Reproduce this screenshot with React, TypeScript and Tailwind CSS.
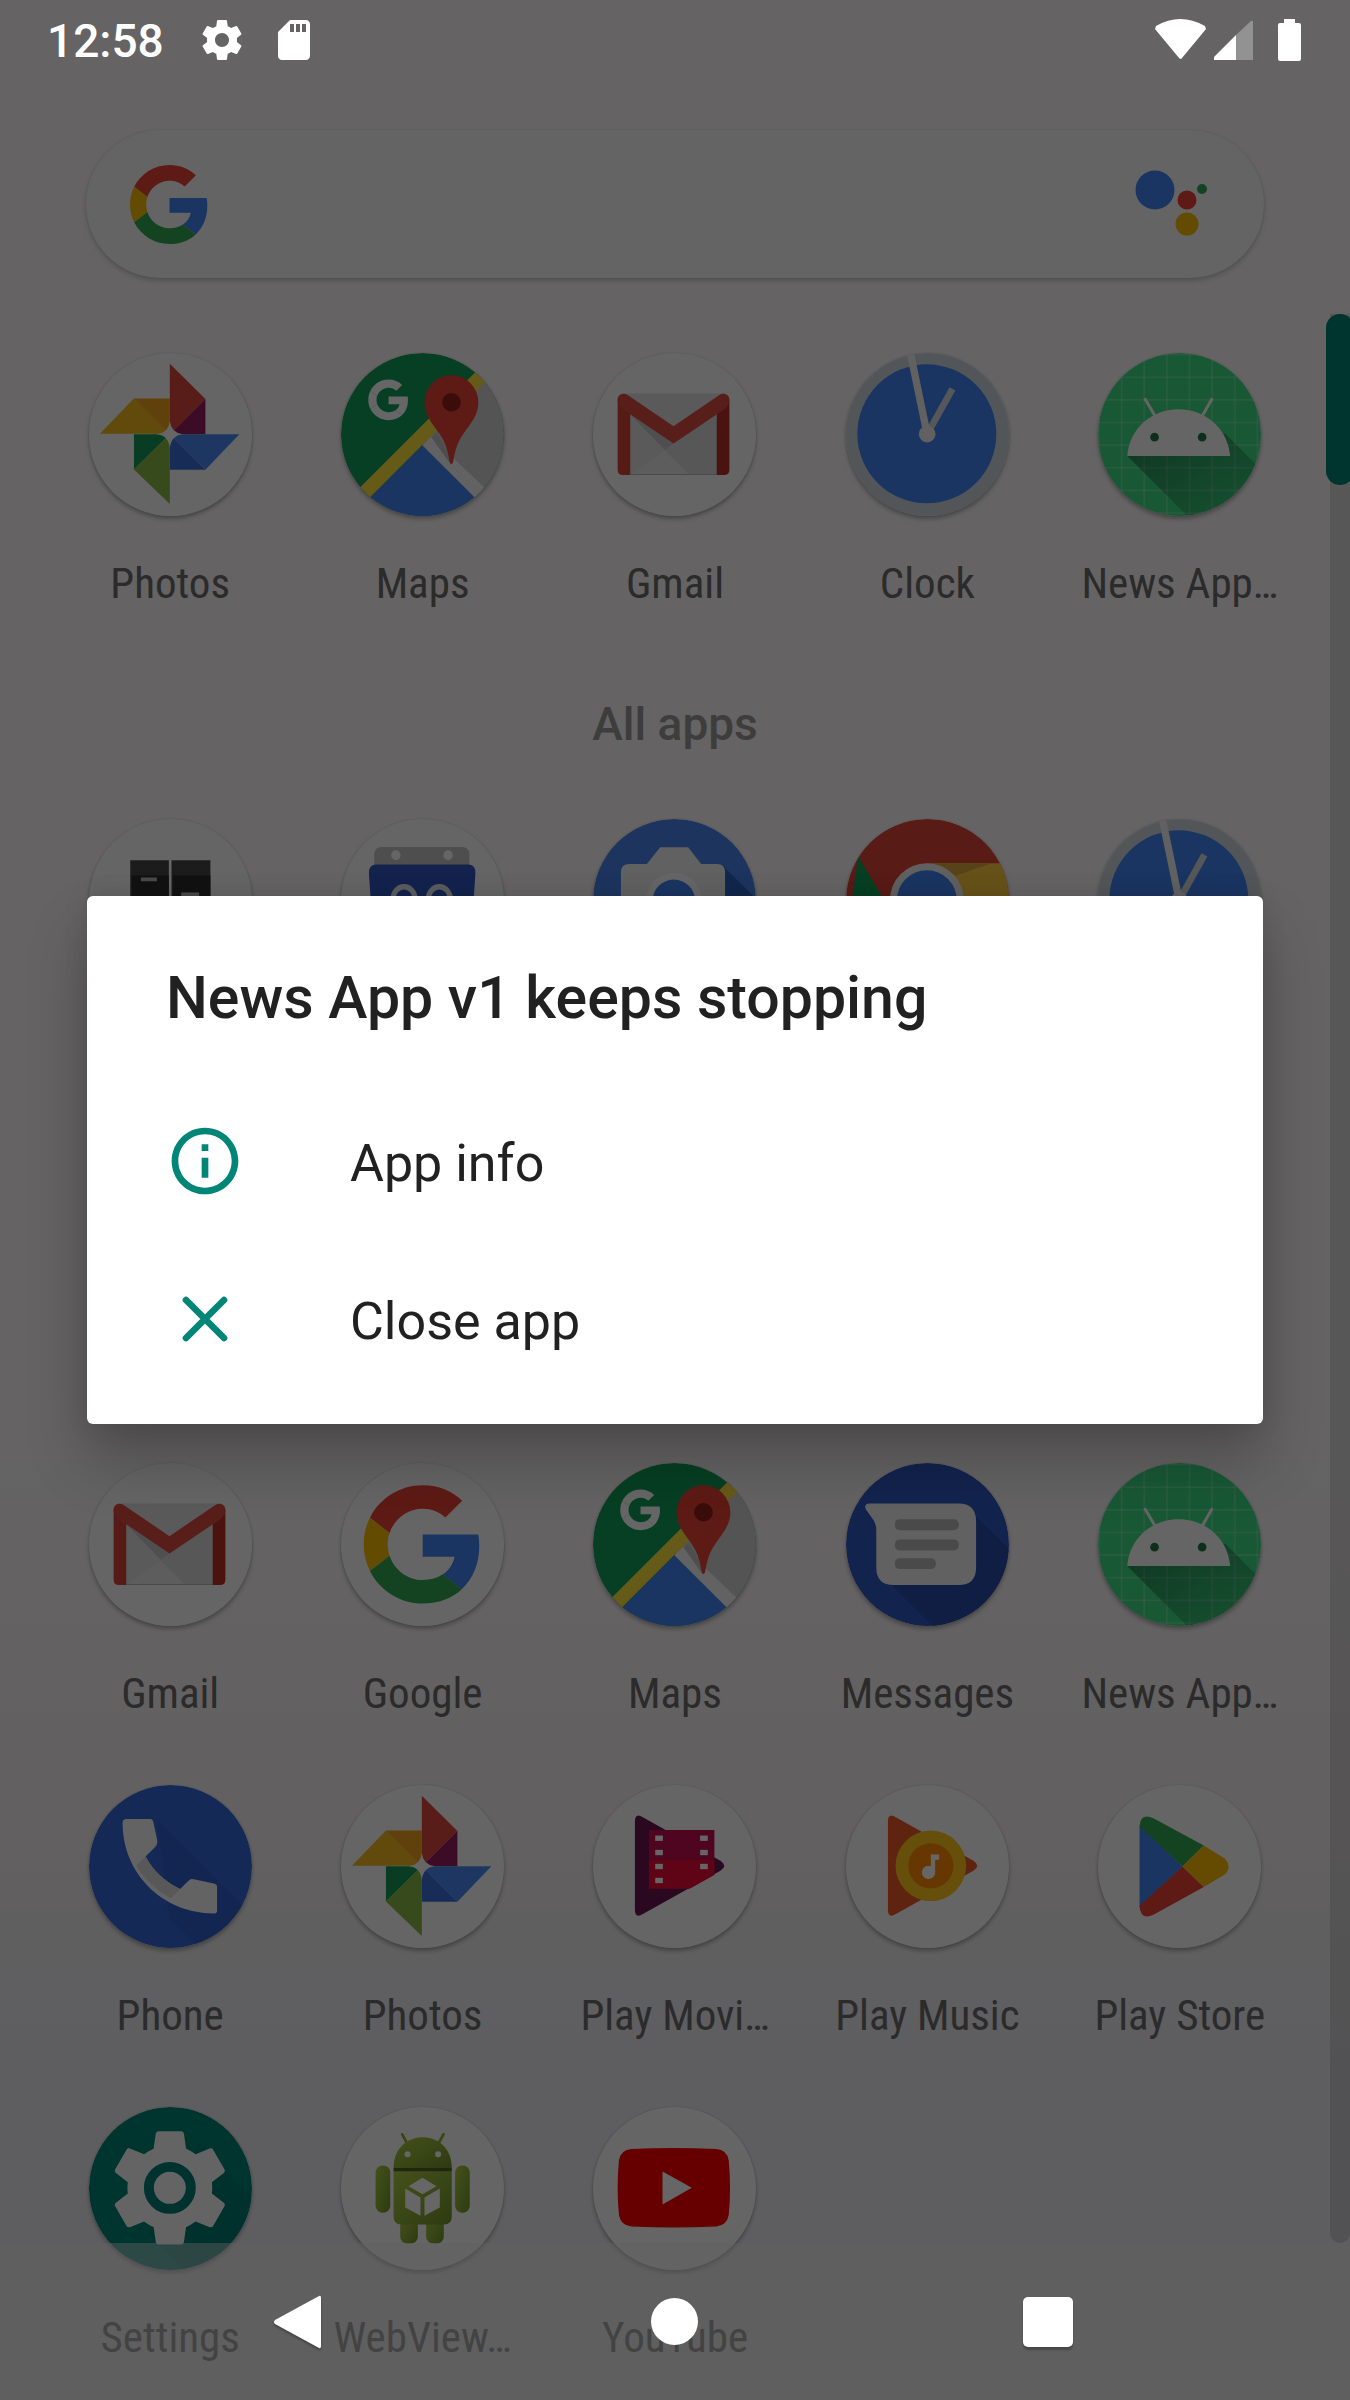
import React from "react";

const GEAR =
  "M19.43 12.98c.04-.32.07-.64.07-.98s-.03-.66-.07-.98l2.11-1.65c.19-.15.24-.42.12-.64l-2-3.46c-.12-.22-.39-.3-.61-.22l-2.49 1c-.52-.4-1.08-.73-1.69-.98l-.38-2.65C14.46 2.18 14.25 2 14 2h-4c-.25 0-.46.18-.49.42l-.38 2.65c-.61.25-1.17.59-1.69.98l-2.49-1c-.23-.09-.49 0-.61.22l-2 3.46c-.13.22-.07.49.12.64l2.11 1.65c-.04.32-.07.65-.07.98s.03.66.07.98l-2.11 1.65c-.19.15-.24.42-.12.64l2 3.46c.12.22.39.3.61.22l2.49-1c.52.4 1.08.73 1.69.98l.38 2.65c.03.24.24.42.49.42h4c.25 0 .46-.18.49-.42l.38-2.65c.61-.25 1.17-.59 1.69-.98l2.49 1c.23.09.49 0 .61-.22l2-3.46c.12-.22.07-.49-.12-.64l-2.11-1.65zM12 15.5c-1.93 0-3.5-1.57-3.5-3.5s1.57-3.5 3.5-3.5 3.5 1.57 3.5 3.5-1.57 3.5-3.5 3.5z";

function GMark({ mono }: { mono?: boolean }) {
  return (
    <>
      <path fill={mono ? "#fff" : "#EA4335"} d="M24 9.5c3.54 0 6.71 1.22 9.21 3.6l6.85-6.85C35.9 2.38 30.47 0 24 0 14.62 0 6.51 5.38 2.56 13.22l7.98 6.19C12.43 13.72 17.74 9.5 24 9.5z" />
      <path fill={mono ? "#fff" : "#4285F4"} d="M46.98 24.55c0-1.57-.15-3.09-.38-4.55H24v9.02h12.94c-.58 2.96-2.26 5.48-4.78 7.18l7.73 6c4.51-4.18 7.09-10.36 7.09-17.65z" />
      <path fill={mono ? "#fff" : "#FBBC05"} d="M10.53 28.59c-.48-1.45-.76-2.99-.76-4.59s.27-3.14.76-4.59l-7.98-6.19C.92 16.46 0 20.12 0 24c0 3.88.92 7.54 2.56 10.78l7.97-6.19z" />
      <path fill={mono ? "#fff" : "#34A853"} d="M24 48c6.48 0 11.93-2.13 15.89-5.81l-7.73-6c-2.15 1.45-4.92 2.3-8.16 2.3-6.26 0-11.57-4.22-13.47-9.91l-7.98 6.19C6.51 42.62 14.62 48 24 48z" />
    </>
  );
}

function Disc({ fill = "#fdfdfd", children }: { fill?: string; children?: React.ReactNode }) {
  const id = React.useId();
  return (
    <svg
      viewBox="0 0 490 490"
      className="h-[163px] w-[163px] rounded-full shadow-[0_3px_4px_rgba(0,0,0,0.28),0_0_2px_rgba(0,0,0,0.15)]"
      aria-hidden="true"
    >
      <defs>
        <clipPath id={id}>
          <circle cx="245" cy="245" r="245" />
        </clipPath>
      </defs>
      <g clipPath={`url(#${id})`}>
        <rect width="490" height="490" fill={fill} />
        {children}
      </g>
    </svg>
  );
}

function PhotosIcon() {
  return (
    <Disc>
      <path fill="#DB4A3D" d="M243 32L350 138 243 244z" />
      <path fill="#96205F" d="M350 138V244H243z" />
      <path fill="#F2B91F" d="M33 243L135 137 243 243z" />
      <path fill="#F0A21C" d="M135 137H243V244z" />
      <path fill="#4C8BF5" d="M243 244H452L350 351z" />
      <path fill="#3B6FD6" d="M243 244L350 351H243z" />
      <path fill="#14995A" d="M135 244H243L135 350z" />
      <path fill="#8AB944" d="M243 244V454L135 350z" />
      <path fill="#fff" d="M243 205Q247 240 282 244 247 248 243 285 239 248 204 244 239 240 243 205z" />
    </Disc>
  );
}

function MapsIcon() {
  return (
    <Disc fill="#0F9D58">
      <path fill="#D2D2D2" d="M270 222L430 62H490V490H400L245 277z" />
      <path fill="#4285F4" d="M245 277L20 502H470z" />
      <path fill="#F5F5F5" d="M245 277L270 252 450 422 420 452z" />
      <path stroke="#FFE03C" strokeWidth="42" d="M50 441L450 41" />
      <path fill="#C4C4C4" d="M288 240L335 320 330 335 272 254z" />
      <path fill="#EA4335" d="M332 67a81 81 0 0 1 81 81c0 38-22 62-46 96-22 32-26 62-30 84q-5 12-10 0c-4-22-8-52-30-84-24-34-46-58-46-96a81 81 0 0 1 81-81z" />
      <circle cx="332" cy="148" r="28" fill="#912119" />
      <g transform="translate(82 80) scale(2.54)">
        <GMark mono />
      </g>
    </Disc>
  );
}

function GmailIcon() {
  return (
    <Disc>
      <path fill="#E0E0E0" d="M90 122H394V367H90z" />
      <path fill="#C6C6C6" d="M112 185L242 272 372 185V367H290z" />
      <path fill="#D9D9D9" d="M242 272L372 185V367H290L215 292z" />
      <path fill="#E8E8E8" d="M112 367L215 292 290 367z" />
      <path fill="#B9B9B9" d="M112 364H372V367H112z" />
      <path fill="#D8423A" d="M74 140V351Q74 367 90 367H112V165z" />
      <path fill="#B8302A" d="M410 140V351Q410 367 394 367H372V165z" />
      <path fill="#DC4B40" d="M74 140C74 124 92 118 104 126L242 220 380 126C392 118 410 124 410 140Q410 158 396 168L242 272 88 168Q74 158 74 140z" />
    </Disc>
  );
}

function ClockIcon() {
  return (
    <Disc fill="#CFD8DC">
      <circle cx="243" cy="243" r="209" fill="#4285F4" />
      <path stroke="#D8DADC" strokeWidth="20" d="M244 244L320 108" />
      <path stroke="#F2F2F2" strokeWidth="22" d="M194 2L244 244" />
      <circle cx="244" cy="244" r="25" fill="#F2F2F2" />
    </Disc>
  );
}

function NewsIcon() {
  const id = React.useId();
  const lines = [3, 71, 139, 207, 275, 343, 411, 479];
  return (
    <Disc fill="#3DDC84">
      <defs>
        <linearGradient id={id} x1="0" y1="0" x2="1" y2="1">
          <stop offset="0" stopOpacity=".38" />
          <stop offset="1" stopOpacity=".06" />
        </linearGradient>
      </defs>
      {lines.map((n) => (
        <path key={n} stroke="#fff" strokeOpacity=".22" strokeWidth="5" d={`M${n} 0V490M0 ${n + 2}H490`} />
      ))}
      <path fill={`url(#${id})`} d="M88 310L270 492H490V350L382 242z" />
      <path fill="#fdfdfd" d="M88 310C94 228 160 169 242 169S391 228 397 310z" />
      <path stroke="#fdfdfd" strokeWidth="9" strokeLinecap="round" d="M142 139L172 190M342 139L313 190" />
      <circle cx="170" cy="253" r="13" fill="#22764A" />
      <circle cx="313" cy="253" r="13" fill="#22764A" />
    </Disc>
  );
}

function DrawersIcon() {
  return (
    <Disc>
      <path fill="#484848" d="M124 124H240V365H124zM248 124H365V365H248z" />
      <path fill="#2E2E30" d="M128 170H240V365H128zM252 170H365V365H252z" />
      <path fill="#B9B9BD" d="M156 176H204V187H156zM277 221H331V232H277z" />
    </Disc>
  );
}

function CalendarIcon() {
  return (
    <Disc>
      <rect x="100" y="84" width="286" height="100" rx="20" fill="#C4C4C4" />
      <ellipse cx="165" cy="109" rx="14" ry="15" fill="#fdfdfd" />
      <ellipse cx="322" cy="109" rx="14" ry="15" fill="#fdfdfd" />
      <path fill="#3158C4" d="M104 137H384Q406 139 404 165L390 370H98L84 165Q82 139 104 137z" />
      <path fill="none" stroke="#E6E8EE" strokeWidth="16" d="M156 245C156 190 223 190 223 245M262 245C262 190 329 190 329 245" />
    </Disc>
  );
}

function CameraIcon() {
  return (
    <Disc fill="#4A86EC">
      <path fill="#2F62BD" d="M390 140L490 240V490H250L100 350z" />
      <path fill="#F3F3F3" d="M202 85H286L325 135H372Q397 135 397 160V350H84V160Q84 135 109 135H162z" />
      <circle cx="243" cy="246" r="84" fill="#fff" />
      <circle cx="243" cy="246" r="64" fill="#4285F4" />
    </Disc>
  );
}

function ChromeIcon() {
  return (
    <Disc fill="#DB4437">
      <path fill="#0F9D58" d="M37 112L147 300 245 490H-20z" />
      <path fill="#FFCD40" d="M243 133H490V490H240L340 300z" />
      <path fill="#D9A93A" d="M243 133H440L330 170z" />
      <circle cx="243" cy="244" r="111" fill="#F1F1F1" />
      <circle cx="243" cy="244" r="90" fill="#4285F4" />
    </Disc>
  );
}

function GoogleIcon() {
  return (
    <Disc>
      <g transform="translate(68 67) scale(7.4)">
        <GMark />
      </g>
    </Disc>
  );
}

function MessagesIcon() {
  return (
    <Disc fill="#2F57C2">
      <path fill="#284DA8" d="M391 160L510 279V520H290L110 340z" />
      <path fill="#F3F3F3" d="M70 122H338Q391 122 391 175V314Q391 367 338 367H144Q91 367 91 314V200Q91 186 83 172L60 140Q52 124 70 122z" />
      <g fill="#B9B9B9">
        <rect x="147" y="169" width="192" height="33" rx="14" />
        <rect x="147" y="230" width="192" height="33" rx="14" />
        <rect x="147" y="286" width="123" height="33" rx="14" />
      </g>
    </Disc>
  );
}

function PhoneIcon() {
  return (
    <Disc fill="#3366D6">
      <path fill="#2F60CA" d="M205 105L490 390V490H330L240 400z" />
      <path fill="#F8F8F8" d="M113 102H185Q192 102 193 110L205 165Q207 178 198 187L170 215Q205 280 274 313L300 287Q306 281 315 283L375 296Q385 298 385 306V378Q385 387 375 386C220 385 101 265 101 114Q101 102 113 102z" />
      <path fill="#DCDCDC" d="M170 215Q205 280 274 313L246 341Q175 300 142 243z" />
    </Disc>
  );
}

const PLAY = "M126 110Q126 82 150 97L383 228Q406 243 383 258L150 388Q126 402 126 375z";

function MoviesIcon() {
  const id = React.useId();
  return (
    <Disc>
      <clipPath id={id}>
        <path d="M126 40H366V270L126 404z" />
      </clipPath>
      <path fill="#6A1450" d={PLAY} />
      <g clipPath={`url(#${id})`}>
        <path fill="#C60A50" d="M168 135H366V224H168z" />
        <path fill="#EE0A38" d="M168 224H366V312H168z" />
      </g>
      {[160, 203, 245, 287].map((y) => (
        <rect key={y} x="187" y={y - 8} width="23" height="16" fill="#fff" />
      ))}
      {[160, 203, 245].map((y) => (
        <rect key={y} x="322" y={y - 8} width="23" height="16" fill="#fff" />
      ))}
    </Disc>
  );
}

function MusicIcon() {
  return (
    <Disc>
      <path fill="#EE5A2A" d={PLAY} />
      <circle cx="255" cy="243" r="106" fill="#FFC61C" />
      <circle cx="255" cy="243" r="68" fill="#FF8A00" />
      <path fill="#fff" d="M255 209H280V225H268V262A20 20 0 1 1 255 244z" />
    </Disc>
  );
}

function StoreIcon() {
  return (
    <Disc>
      <path fill="#4285F4" d="M125 122L254 245 125 368z" />
      <path fill="#34A853" d="M125 125Q127 80 168 101L318 182 254 245z" />
      <path fill="#EA4335" d="M125 363Q127 409 168 389L318 307 254 245z" />
      <path fill="#FBBC04" d="M318 182L380 220Q405 245 380 270L318 307 254 245z" />
    </Disc>
  );
}

function SettingsIcon() {
  return (
    <Disc fill="#008577">
      <path fill="#007A70" d="M330 110L490 270V490H290L180 380z" />
      <g transform="translate(39 39) scale(17)">
        <path fill="#FAFAFA" d={GEAR} />
      </g>
      <circle cx="243" cy="243" r="90" fill="#FAFAFA" />
      <circle cx="243" cy="243" r="63" fill="none" stroke="#007F78" strokeWidth="30" />
    </Disc>
  );
}

function WebViewIcon() {
  const id = React.useId();
  return (
    <Disc>
      <defs>
        <linearGradient id={id} x1="0" y1="0" x2="1" y2="1">
          <stop offset="0" stopColor="#ABCB45" />
          <stop offset="1" stopColor="#73932A" />
        </linearGradient>
      </defs>
      <path stroke="#8CAE35" strokeWidth="8" strokeLinecap="round" d="M184 82L202 115M308 82L290 115" />
      <g fill={`url(#${id})`}>
        <path d="M158 183C158 60 333 60 333 183z" />
        <rect x="104" y="176" width="44" height="142" rx="21" />
        <rect x="343" y="176" width="44" height="142" rx="21" />
        <rect x="178" y="320" width="53" height="90" rx="20" />
        <rect x="256" y="320" width="53" height="90" rx="20" />
        <path d="M158 194H333V330Q333 353 310 353H181Q158 353 158 330z" />
      </g>
      <path fill="#4F6520" d="M158 183H333V194H158z" />
      <circle cx="200" cy="142" r="9" fill="#fff" />
      <circle cx="292" cy="142" r="9" fill="#fff" />
      <path fill="#fff" d="M245 213L287 238 245 262 203 238zM193 245L239 272V327L193 302zM297 245L251 272V327L297 302z" />
    </Disc>
  );
}

function YouTubeIcon() {
  return (
    <Disc>
      <path fill="#FF0000" d="M115 126Q243 120 371 126 402 128 408 160 416 243 408 325 402 357 371 359 243 366 115 359 84 357 78 325 70 243 78 160 84 128 115 126z" />
      <path fill="#fff" d="M209 194L297 243 209 293z" />
    </Disc>
  );
}

type App = { name: string; icon: React.ReactNode };

const suggested: App[] = [
  { name: "Photos", icon: <PhotosIcon /> },
  { name: "Maps", icon: <MapsIcon /> },
  { name: "Gmail", icon: <GmailIcon /> },
  { name: "Clock", icon: <ClockIcon /> },
  { name: "News App…", icon: <NewsIcon /> },
];

const covered: App[] = [
  { name: "API Demos", icon: <DrawersIcon /> },
  { name: "Calendar", icon: <CalendarIcon /> },
  { name: "Camera", icon: <CameraIcon /> },
  { name: "Chrome", icon: <ChromeIcon /> },
  { name: "Clock", icon: <ClockIcon /> },
];

const apps: App[] = [
  { name: "Gmail", icon: <GmailIcon /> },
  { name: "Google", icon: <GoogleIcon /> },
  { name: "Maps", icon: <MapsIcon /> },
  { name: "Messages", icon: <MessagesIcon /> },
  { name: "News App…", icon: <NewsIcon /> },
  { name: "Phone", icon: <PhoneIcon /> },
  { name: "Photos", icon: <PhotosIcon /> },
  { name: "Play Movi…", icon: <MoviesIcon /> },
  { name: "Play Music", icon: <MusicIcon /> },
  { name: "Play Store", icon: <StoreIcon /> },
  { name: "Settings", icon: <SettingsIcon /> },
  { name: "WebView…", icon: <WebViewIcon /> },
  { name: "YouTube", icon: <YouTubeIcon /> },
];

function AppGrid({ items, labels = true }: { items: App[]; labels?: boolean }) {
  return (
    <div className="grid grid-cols-5 gap-y-[66px] px-11">
      {items.map((a) => (
        <button key={a.name} type="button" aria-label={a.name} className="flex flex-col items-center">
          {a.icon}
          {labels && (
            <span className="mt-[41px] font-['Roboto_Condensed','Roboto',sans-serif] text-[43px] leading-[52px] whitespace-nowrap text-[#6b6b6b]">
              {a.name}
            </span>
          )}
        </button>
      ))}
    </div>
  );
}

function StatusBar() {
  return (
    <header className="flex h-[77px] items-center pt-[3px] pr-[49px] pl-[47px] text-white">
      <span className="pt-[2px] text-[46px] leading-[56px] font-medium">12:58</span>
      <svg viewBox="0 0 24 24" className="ml-[34px] h-12 w-12 fill-white" aria-hidden="true">
        <path d={GEAR} />
      </svg>
      <svg viewBox="0 0 24 24" className="ml-6 h-12 w-12 fill-white" aria-hidden="true">
        <path d="M18 2h-8L4.02 8 4 20c0 1.1.9 2 2 2h12c1.1 0 2-.9 2-2V4c0-1.1-.9-2-2-2zm-6 6h-2V4h2v4zm3 0h-2V4h2v4zm3 0h-2V4h2v4z" />
      </svg>
      <svg viewBox="0 0 146 42" className="ml-auto h-[42px] w-[146px] fill-white" aria-hidden="true">
        <path d="M1 7Q25-7 50 7L51 10 27 39Q26 41 24 39L0 10z" />
        <path fillOpacity=".3" d="M81 16L96 2H98V41H81z" />
        <path d="M59 41V38L81 16V41z" />
        <path d="M129 0H140V4H144Q146 4 146 6V40Q146 42 144 42H125Q123 42 123 40V6Q123 4 125 4H129z" />
      </svg>
    </header>
  );
}

export default function App() {
  return (
    <div className="relative min-h-screen overflow-hidden bg-linear-to-b from-[#fcf8f8] from-60% via-[#f4eff0] via-77% to-[#ebebf0] to-86% font-['Roboto',sans-serif]">
      <main className="pt-[130px]">
        <div className="mx-[86px] flex h-[148px] items-center justify-between rounded-full bg-[#fafafa] pr-[57px] pl-[44px] shadow-[0_3px_5px_rgba(0,0,0,0.18),0_0_2px_rgba(0,0,0,0.12)]">
          <button type="button" aria-label="Google search">
            <svg viewBox="0 0 48 48" className="h-[79px] w-[79px]" aria-hidden="true">
              <GMark />
            </svg>
          </button>
          <button type="button" aria-label="Assistant">
            <svg viewBox="0 0 72 79" className="h-[79px] w-[72px]" aria-hidden="true">
              <circle cx="20" cy="25" r="19.5" fill="#4285F4" />
              <circle cx="52" cy="35" r="9.5" fill="#EA4335" />
              <circle cx="67" cy="24" r="5" fill="#34A853" />
              <circle cx="52" cy="59" r="11.5" fill="#FBBC05" />
            </svg>
          </button>
        </div>
        <section className="mt-[75px]" aria-label="Suggested apps">
          <AppGrid items={suggested} />
        </section>
        <h2 className="mt-[85px] mb-[65px] text-center text-[46px] leading-[60px] font-medium text-[#999]">All apps</h2>
        <AppGrid items={covered} labels={false} />
        <div className="mt-[481px]">
          <AppGrid items={apps} />
        </div>
      </main>

      <div className="absolute top-[314px] right-0 bottom-[157px] w-6 overflow-hidden">
        <div className="ml-1 h-full rounded-b-xl bg-black/12" />
        <div className="absolute top-0 left-0 h-[171px] w-7 rounded-[14px] bg-[#008577]" />
      </div>

      <div className="absolute inset-0 flex flex-col bg-black/60">
        <StatusBar />
        <div className="flex flex-1 items-center px-[87px]">
          <div
            role="dialog"
            aria-labelledby="crash-title"
            className="w-full rounded-md bg-white pb-[26px] text-[#212121] shadow-[0_36px_60px_rgba(0,0,0,0.24),0_0_24px_rgba(0,0,0,0.1)]"
          >
            <h1 id="crash-title" className="px-[79px] pt-[66px] pb-[48px] text-[59px] leading-[72px] font-medium">
              News App v1 keeps stopping
            </h1>
            <button type="button" className="flex h-[158px] w-full items-center pl-[78px] text-left text-[52px] leading-[64px]">
              <svg viewBox="0 0 24 24" className="mr-[105px] h-20 w-20 fill-[#008577]" aria-hidden="true">
                <path d="M11 7h2v2h-2zm0 4h2v6h-2zm1-9C6.48 2 2 6.48 2 12s4.48 10 10 10 10-4.48 10-10S17.52 2 12 2zm0 18c-4.41 0-8-3.59-8-8s3.59-8 8-8 8 3.59 8 8-3.59 8-8 8z" />
              </svg>
              <span className="pt-[5px]">App info</span>
            </button>
            <button type="button" className="flex h-[158px] w-full items-center pl-[78px] text-left text-[52px] leading-[64px]">
              <svg viewBox="0 0 24 24" className="mr-[105px] h-20 w-20 stroke-[#008577]" aria-hidden="true">
                <path strokeWidth="2" strokeLinecap="round" d="M6.3 6.3L17.7 17.7M17.7 6.3L6.3 17.7" />
              </svg>
              <span className="pt-[5px]">Close app</span>
            </button>
          </div>
        </div>
        <nav className="grid h-[157px] grid-cols-3 items-center bg-[#616161]/45 pr-[115px] pl-[113px]">
          <button type="button" aria-label="Back" className="flex justify-center drop-shadow-[0_2px_1px_rgba(0,0,0,0.3)]">
            <svg viewBox="0 0 52 54" className="h-[54px] w-[52px] fill-white" aria-hidden="true">
              <path d="M45 1Q47 0 47 3V51Q47 54 45 53L1 29Q-1 27 1 25z" />
            </svg>
          </button>
          <button type="button" aria-label="Home" className="flex justify-center">
            <span className="h-[47px] w-[47px] rounded-full bg-white" />
          </button>
          <button type="button" aria-label="Recent apps" className="flex justify-center">
            <span className="h-[50px] w-[50px] rounded-[5px] bg-white shadow-[0_3px_2px_rgba(0,0,0,0.25)]" />
          </button>
        </nav>
      </div>
    </div>
  );
}
